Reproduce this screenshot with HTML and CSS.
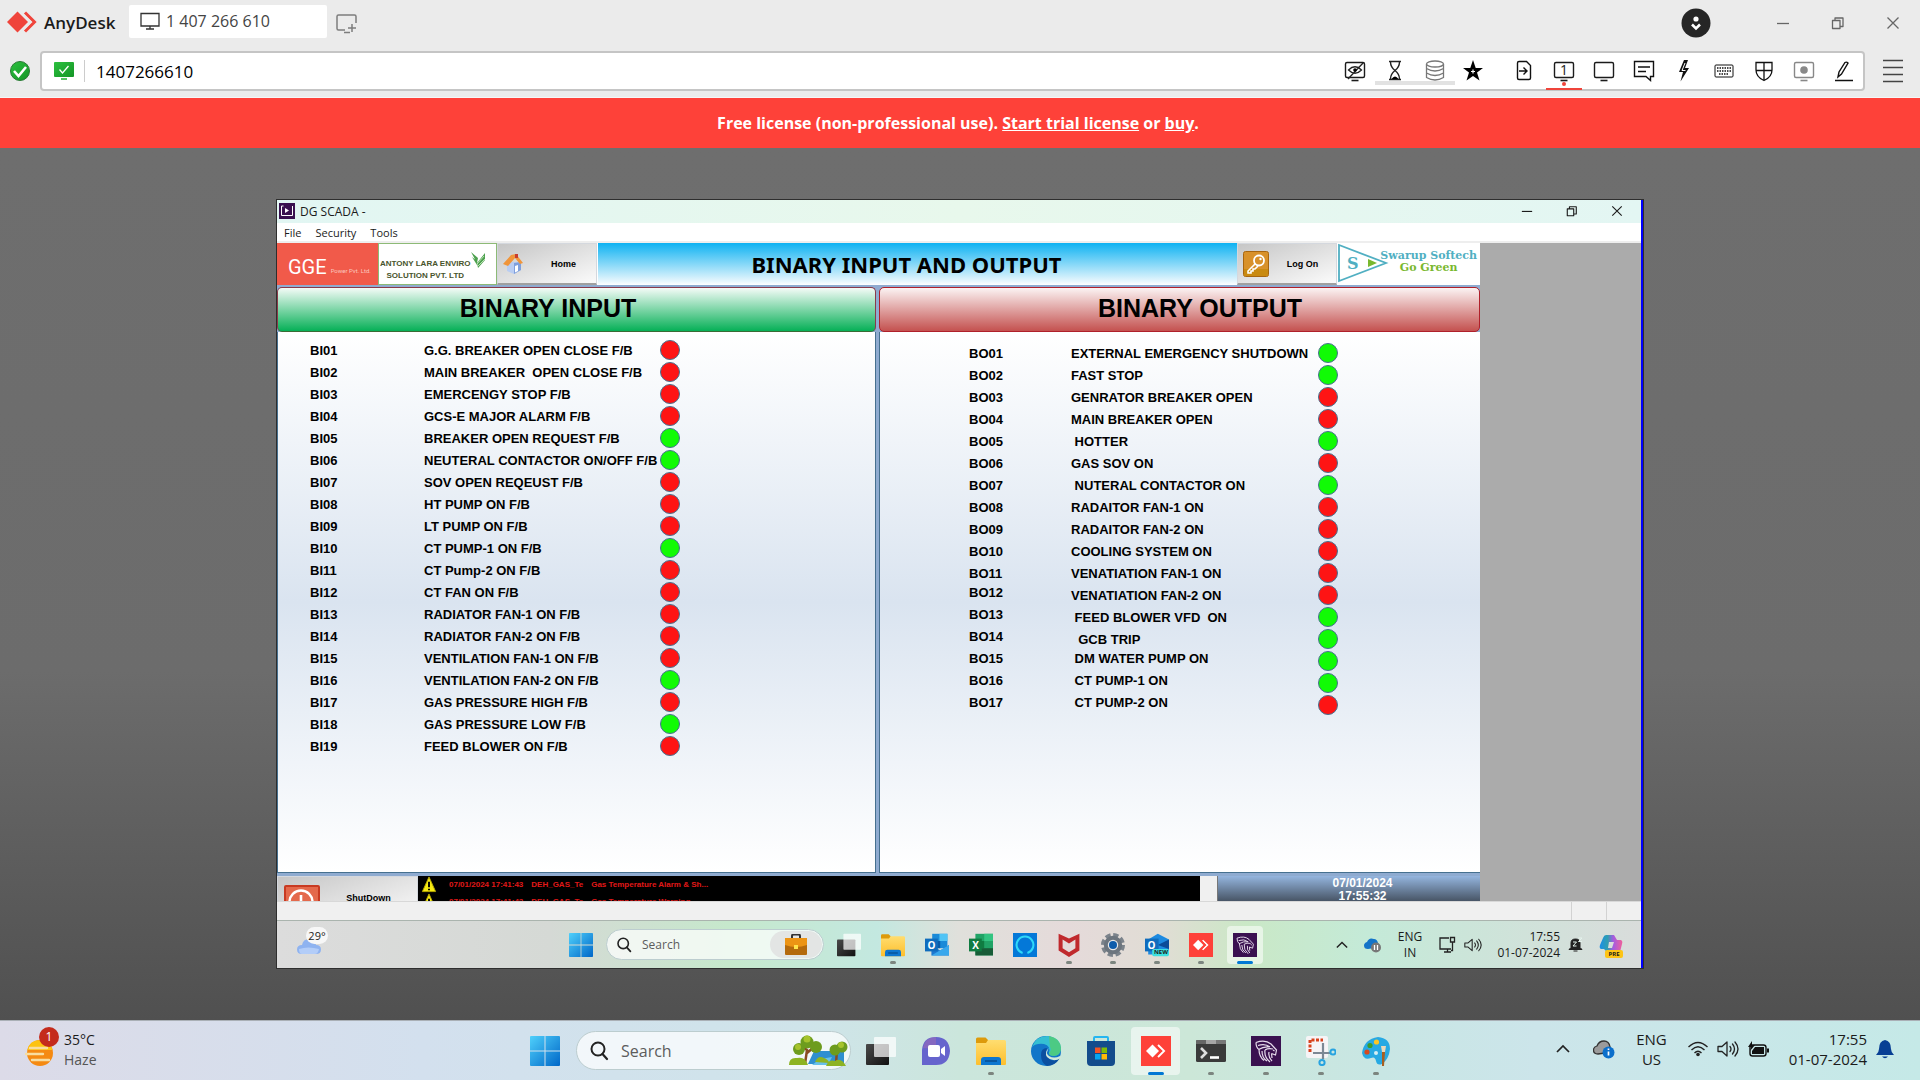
FILE: index.html
```html
<!DOCTYPE html>
<html lang="en">
  <head>
    <meta charset="UTF-8" />
    <title>AnyDesk</title>
    <link rel="stylesheet" href="styles.css">
  </head>
  <body>
    <!-- shared icons -->
    <svg class="defs" width="0" height="0" aria-hidden="true">
      <defs>
        <linearGradient id="g-blue" x1="0" y1="0" x2="1" y2="1"><stop offset="0" stop-color="#4fd0fb"/><stop offset="1" stop-color="#0067c8"/></linearGradient>
        <linearGradient id="g-green" x1="0" y1="0" x2="1" y2="1"><stop offset="0" stop-color="#2cc03f"/><stop offset="1" stop-color="#149526"/></linearGradient>
        <linearGradient id="g-dark" x1="0" y1="0" x2="1" y2="1"><stop offset="0" stop-color="#4a4a4a"/><stop offset="1" stop-color="#111"/></linearGradient>
        <linearGradient id="g-folder" x1="0" y1="0" x2="0" y2="1"><stop offset="0" stop-color="#ffdd70"/><stop offset="1" stop-color="#fdbf2d"/></linearGradient>
        <linearGradient id="g-copilot" x1="0" y1="0" x2="1" y2="0"><stop offset="0" stop-color="#1a8ee8"/><stop offset=".35" stop-color="#2f9fb0"/><stop offset=".6" stop-color="#a55be0"/><stop offset="1" stop-color="#f0609a"/></linearGradient>
        <symbol id="start" viewBox="0 0 30 30"><path fill="url(#g-blue)" d="M1 0h13.500v14.500H0V1q0-1 1-1zM15.500 0H29q1 0 1 1v13.500H15.500zM0 15.500h14.500V30H1q-1 0-1-1zM15.500 15.500H30V29q0 1-1 1H15.500z"/></symbol>
        <symbol id="lens" viewBox="0 0 20 20"><circle cx="9" cy="8" r="6.500" fill="none" stroke="#222" stroke-width="2"/><path d="M13.500 13l4.500 5" stroke="#222" stroke-width="2.200" stroke-linecap="round"/></symbol>
        <symbol id="taskview" viewBox="0 0 30 30"><rect y="8" width="23" height="21" rx="1" fill="url(#g-dark)"/><rect x="8" y="1" width="22" height="20" rx="1" fill="#fff" opacity=".72"/></symbol>
        <symbol id="folder" viewBox="0 0 30 30"><path d="M0 9V3q0-1.500 1.500-1.500h8L12 4v5z" fill="#dd9a0b"/><path d="M0 7h10l2-3h16.500Q30 4 30 5.500V28q0 1-1 1H1q-1 0-1-1z" fill="url(#g-folder)"/><path d="M5 29v-5q0-3 3-3h14q3 0 3 3v5z" fill="#0c76cf"/><path d="M9 25h12" stroke="#064d8f" stroke-width="1.500"/></symbol>
        <symbol id="anydesk" viewBox="0 0 30 30"><path d="M0 0h30v30H0z" fill="#fe4139"/><path d="M17 9l6 6-6 6" fill="none" stroke="#fff" stroke-width="2"/><path d="M13 8l7 7-7 7" fill="none" stroke="#fe4139" stroke-width="2"/><path d="M5 15l6.500-6.500L18 15l-6.500 6.500z" fill="#fff"/></symbol>
        <symbol id="lion" viewBox="0 0 30 30"><path d="M0 0h30v30H0z" fill="#3a1150"/><path d="M5 6.500Q14 3 20 8l5.500 6-1 5-4-1.500M5 6.500q0 5 3 7M7 9.500Q14 7 19 11M7.500 13.500Q13 10 19 11M8 13.500q0 7 5 11M11 15q0 7 5 10M14 14q-1 7 5 12M14 14q3-2 8-1M18 16q-1 5 3 9M22 14l1.500 1M20.500 17.500L21 22" fill="none" stroke="#e6dcec" stroke-width="1.200"/></symbol>
        <symbol id="speaker" viewBox="0 0 22 18"><path d="M1 6.500h4L10 2v14L5 11.500H1zM13 6.500q2 2.500 0 5M15.500 4q4 5 0 10M18 2q6 7 0 14" fill="none" stroke="#222" stroke-width="1.300" stroke-linejoin="round" stroke-linecap="round"/></symbol>
        <symbol id="chevron" viewBox="0 0 14 14"><path d="M1 10l6-6 6 6" fill="none" stroke="#222" stroke-width="1.700"/></symbol>
        <symbol id="close" viewBox="0 0 14 14"><path d="M1.500 1.500l11 11M12.500 1.500l-11 11" fill="none" stroke="currentColor" stroke-width="1.300"/></symbol>
        <symbol id="restore" viewBox="0 0 14 14"><path d="M1.500 4.500h7.500v8H1.500zM4 4V2h8v8.500H9.500" fill="none" stroke="currentColor" stroke-width="1.300" stroke-linejoin="round"/></symbol>
        <symbol id="minimize" viewBox="0 0 14 14"><path d="M1 7.500h12" stroke="currentColor" stroke-width="1.300"/></symbol>
        <symbol id="warning" viewBox="0 0 16 18"><path d="M8 1L15 16.500H1z" fill="#f7ec13" stroke="#b7a800" stroke-linejoin="round"/><path d="M8 6v6M8 13.500v1.500" stroke="#000" stroke-width="2"/></symbol>
        <symbol id="screen" viewBox="0 0 24 24"><rect x="2.500" y="3.500" width="19" height="15" rx="1.500" fill="none" stroke="currentColor" stroke-width="1.400"/><path d="M8.500 21.500h7" stroke="currentColor" stroke-width="1.600"/></symbol>
      </defs>
    </svg>

    <header class="tabs">
      <div class="brand">
        <svg width="30" height="22" viewBox="0 0 30 22"><path d="M0 11L10.500.5 21 11 10.500 21.500z" fill="#ef443b"/><path d="M18 1.500l9.500 9.500-9.500 9.500" fill="none" stroke="#ef443b" stroke-width="3"/><path d="M12.500 0L23.500 11l-11 11" fill="none" stroke="#ebebeb" stroke-width="2"/></svg>
        <span>AnyDesk</span>
      </div>
      <button class="tab">
        <svg width="20" height="18" viewBox="0 0 20 18"><path d="M1 1.500h18v12.500H1zM10 14v3M6 17h8" fill="none" stroke="#333" stroke-width="1.300"/></svg>
        1 407 266 610
      </button>
      <button class="new-tab" aria-label="New session">
        <svg width="22" height="20" viewBox="0 0 22 20"><path d="M9 16H2.500Q1 16 1 14.500v-12Q1 1 2.500 1h16Q20 1 20 2.500V9M16 10v8M12 14h8M8 18.500h6" fill="none" stroke="#7d7d7d" stroke-width="1.500"/></svg>
      </button>
      <div class="window-buttons">
        <button aria-label="Discovery"><svg width="30" height="30" viewBox="0 0 30 30"><circle cx="15" cy="15" r="14.500" fill="#262626"/><circle cx="15" cy="11" r="2.600" fill="#fff"/><path d="M11 16.500l4 4 4-4" fill="none" stroke="#fff" stroke-width="2.600"/></svg></button>
        <button aria-label="Minimize"><svg width="14" height="14"><use href="#minimize"/></svg></button>
        <button aria-label="Restore"><svg width="14" height="14"><use href="#restore"/></svg></button>
        <button aria-label="Close"><svg width="14" height="14"><use href="#close"/></svg></button>
      </div>
    </header>

    <div class="address-row">
      <svg class="status" width="20" height="20" viewBox="0 0 20 20"><circle cx="10" cy="10" r="9.500" fill="url(#g-green)" stroke="#2a7a35"/><path d="M4 10l4.500 5 7.500-9" fill="none" stroke="#fff" stroke-width="2.600"/></svg>
      <div class="address">
        <svg class="peer" width="20" height="18" viewBox="0 0 20 18"><rect width="20" height="15" rx="1" fill="url(#g-green)"/><path d="M7 17h6" stroke="#2cb43c" stroke-width="1.600"/><path d="M5.500 7.500l3 3.500 6-7" fill="none" stroke="#fff" stroke-width="1.300"/></svg>
        <input type="text" value="1407266610" aria-label="Remote address">
        <div class="tools">
          <button aria-label="Privacy"><svg width="24" height="24" viewBox="0 0 24 24"><use href="#screen"/><path d="M5.500 11q6.500-6.500 13 0-6.500 6.500-13 0zM20.500 3.500L5 20" fill="none" stroke="#222" stroke-width="1.300"/><circle cx="12" cy="11" r="1.800"/></svg></button>
          <button class="off" aria-label="Wait"><svg width="24" height="24" viewBox="0 0 24 24"><path d="M6 2.500h12M6 20.500h12M7.500 3q0 5 4.500 8.500Q16.500 8 16.500 3M7.500 20q0-5 4.500-8.500 4.500 3.500 4.500 8.500" fill="none" stroke="#222" stroke-width="1.400"/><path d="M8.500 20q3.500-5 7 0z"/></svg></button>
          <button class="off" aria-label="Storage"><svg width="24" height="24" viewBox="0 0 24 24"><g fill="none" stroke="#777" stroke-width="1.300"><ellipse cx="12" cy="5" rx="8.500" ry="3"/><path d="M3.500 5v13.500q8.500 5 17 0V5M3.500 9.500q8.500 5 17 0M3.500 14q8.500 5 17 0"/></g></svg></button>
          <button class="star" aria-label="Favorite"><svg width="24" height="24" viewBox="0 0 24 24"><path d="M12 1l2.700 8H22l-6 4.500 2.500 8L12 17l-6.500 4.500 2.500-8L2 9h7.300z"/><path d="M12 10.500v4M10 12.500h4" stroke="#fff" stroke-width="1.200"/></svg></button>
          <button aria-label="File transfer"><svg width="24" height="24" viewBox="0 0 24 24"><path d="M5.500 4q0-1.500 1.500-1.500h7.500l4 4V19q0 1.500-1.500 1.500H7q-1.500 0-1.500-1.500zM7 12h8M11.500 8.500L15 12l-3.500 3.500" fill="none" stroke="#111" stroke-width="1.400"/></svg></button>
          <button class="on" aria-label="Monitor 1"><svg width="24" height="24"><use href="#screen"/></svg><span>1</span></button>
          <button aria-label="Display"><svg width="24" height="24"><use href="#screen"/></svg></button>
          <button aria-label="Chat"><svg width="24" height="24" viewBox="0 0 24 24"><path d="M2.500 2.500h19v15h-3v4l-4.500-4H2.500zM6 8h12M6 12.500h8" fill="none" stroke="#111" stroke-width="1.400"/></svg></button>
          <button aria-label="Actions"><svg width="24" height="24" viewBox="0 0 24 24"><path d="M12 1h4l-3 8h4L8.500 22.500l2.500-9.500H7z" fill="#111"/><path d="M13 4l-3 7.500h3.500" fill="none" stroke="#fff"/></svg></button>
          <button aria-label="Keyboard"><svg width="24" height="24" viewBox="0 0 24 24"><rect x="3" y="6" width="18" height="12" rx="1" fill="none" stroke="#111"/><path d="M5 9h14M5 12h14M7 15h10" stroke="#111" stroke-width="1.700" stroke-dasharray="1.500 1"/></svg></button>
          <button aria-label="Permissions"><svg width="24" height="24" viewBox="0 0 24 24"><path d="M4 3.500h16V11q0 7-8 10.500Q4 18 4 11zM12 3v18M4 11.500h16" fill="none" stroke="#111" stroke-width="1.300"/></svg></button>
          <button class="dim" aria-label="Record"><svg width="24" height="24"><use href="#screen"/><circle cx="12" cy="11" r="3.800" fill="currentColor"/></svg></button>
          <button aria-label="Whiteboard"><svg width="24" height="24" viewBox="0 0 24 24"><path d="M6 18l1-5 6-9.500q1.500-1 3 .5L9.500 15zM3 21.500h18" fill="none" stroke="#111" stroke-width="1.400"/></svg></button>
        </div>
      </div>
      <button class="menu" aria-label="Menu"><svg width="20" height="24" viewBox="0 0 20 24"><path d="M0 1.500h20M0 8.500h20M0 15.500h20M0 22.500h20" stroke="#444" stroke-width="1.300"/></svg></button>
    </div>

    <div class="banner">Free license (non-professional use). <a href="#">Start trial license</a> or <a href="#">buy</a>.</div>

    <main class="workspace">
      <div class="remote">
        <div class="titlebar">
          <svg width="16" height="16" viewBox="0 0 16 16"><path d="M0 0h16v16H0z" fill="#3a1150"/><path d="M2.500 3v9.500h11V3M2.500 3h2" fill="none" stroke="#fff"/><path d="M6 5l4 2.500L6 10z" fill="#fff"/></svg>
          <span>DG SCADA -</span>
          <div class="remote-buttons">
            <button aria-label="Minimize"><svg width="12" height="12"><use href="#minimize"/></svg></button>
            <button aria-label="Restore"><svg width="12" height="12"><use href="#restore"/></svg></button>
            <button aria-label="Close"><svg width="12" height="12"><use href="#close"/></svg></button>
          </div>
        </div>
        <nav class="menubar"><button>File</button><button>Security</button><button>Tools</button></nav>

        <div class="client">
          <div class="app">
            <div class="app-header">
              <div class="gge"><b>GGE</b><small>Power Pvt. Ltd.</small></div>
              <div class="antony">
                <div>ANTONY LARA ENVIRO<br>SOLUTION PVT. LTD</div>
                <svg width="15" height="18" viewBox="0 0 15 18"><path d="M0 1l7 6-1 5zM1 6l5 4v4zM14 2L6 12l1 5 7-8z" fill="#4da14f"/><path d="M13 5l-7 8M14 8l-7 7" stroke="#b8e0b0"/></svg>
              </div>
              <button class="app-button">
                <svg width="20" height="22" viewBox="0 0 20 22"><path d="M4 9h14v8l-7 4-7-3z" fill="#b9cdf2"/><path d="M11 10l7-1v8l-7 4z" fill="#7f9fdc"/><path d="M0 11L8 2l5-1 7 9-3 1-5-6-7 8z" fill="#f0953a"/><path d="M12 1h3v4h-3z" fill="#c73c2e"/><path d="M12 13l3-1v6l-3 1.500z" fill="#fff"/></svg>
                <span>Home</span>
              </button>
              <h1>BINARY INPUT AND OUTPUT</h1>
              <button class="app-button logon">
                <svg width="26" height="26" viewBox="0 0 26 26"><rect x=".5" y=".5" width="25" height="25" rx="2" fill="#d8912a" stroke="#a8660f"/><path d="M1 18h24v6q0 1-1 1H2q-1 0-1-1z" fill="#c98a10"/><path d="M12.500 12.500L5 20v2h3v-2h2v-2h2l3-3" fill="none" stroke="#fff" stroke-width="1.600"/><circle cx="16" cy="9.500" r="5" fill="none" stroke="#fff" stroke-width="1.800"/><circle cx="17.500" cy="8" r="1.200" fill="#fff"/></svg>
                <span>Log On</span>
              </button>
              <div class="swarup">
                <svg width="52" height="40" viewBox="0 0 52 40"><path d="M2 2v36l47-18z" fill="none" stroke="#50afc2" stroke-width="1.800"/><path d="M31 16v8l9-4z" fill="#79b82e"/></svg>
                <b>S</b>
                <div>Swarup Softech<span>Go Green</span></div>
              </div>
            </div>

            <div class="panels">
              <section class="panel inputs">
                <h2>BINARY INPUT</h2>
                <div class="panel-body">
                  <table>
                    <tbody>
                      <tr><td>BI01</td><td>G.G. BREAKER OPEN CLOSE F/B</td><td><i class="red"></i></td></tr>
                      <tr><td>BI02</td><td>MAIN BREAKER  OPEN CLOSE F/B</td><td><i class="red"></i></td></tr>
                      <tr><td>BI03</td><td>EMERCENGY STOP F/B</td><td><i class="red"></i></td></tr>
                      <tr><td>BI04</td><td>GCS-E MAJOR ALARM F/B</td><td><i class="red"></i></td></tr>
                      <tr><td>BI05</td><td>BREAKER OPEN REQUEST F/B</td><td><i class="green"></i></td></tr>
                      <tr><td>BI06</td><td>NEUTERAL CONTACTOR ON/OFF F/B</td><td><i class="green"></i></td></tr>
                      <tr><td>BI07</td><td>SOV OPEN REQEUST F/B</td><td><i class="red"></i></td></tr>
                      <tr><td>BI08</td><td>HT PUMP ON F/B</td><td><i class="red"></i></td></tr>
                      <tr><td>BI09</td><td>LT PUMP ON F/B</td><td><i class="red"></i></td></tr>
                      <tr><td>BI10</td><td>CT PUMP-1 ON F/B</td><td><i class="green"></i></td></tr>
                      <tr><td>BI11</td><td>CT Pump-2 ON F/B</td><td><i class="red"></i></td></tr>
                      <tr><td>BI12</td><td>CT FAN ON F/B</td><td><i class="red"></i></td></tr>
                      <tr><td>BI13</td><td>RADIATOR FAN-1 ON F/B</td><td><i class="red"></i></td></tr>
                      <tr><td>BI14</td><td>RADIATOR FAN-2 ON F/B</td><td><i class="red"></i></td></tr>
                      <tr><td>BI15</td><td>VENTILATION FAN-1 ON F/B</td><td><i class="red"></i></td></tr>
                      <tr><td>BI16</td><td>VENTILATION FAN-2 ON F/B</td><td><i class="green"></i></td></tr>
                      <tr><td>BI17</td><td>GAS PRESSURE HIGH F/B</td><td><i class="red"></i></td></tr>
                      <tr><td>BI18</td><td>GAS PRESSURE LOW F/B</td><td><i class="green"></i></td></tr>
                      <tr><td>BI19</td><td>FEED BLOWER ON F/B</td><td><i class="red"></i></td></tr>
                    </tbody>
                  </table>
                </div>
              </section>
              <section class="panel outputs">
                <h2>BINARY OUTPUT</h2>
                <div class="panel-body">
                  <table>
                    <tbody>
                      <tr><td>BO01</td><td>EXTERNAL EMERGENCY SHUTDOWN</td><td><i class="green"></i></td></tr>
                      <tr><td>BO02</td><td>FAST STOP</td><td><i class="green"></i></td></tr>
                      <tr><td>BO03</td><td>GENRATOR BREAKER OPEN</td><td><i class="red"></i></td></tr>
                      <tr><td>BO04</td><td>MAIN BREAKER OPEN</td><td><i class="red"></i></td></tr>
                      <tr><td>BO05</td><td> HOTTER</td><td><i class="green"></i></td></tr>
                      <tr><td>BO06</td><td>GAS SOV ON</td><td><i class="red"></i></td></tr>
                      <tr><td>BO07</td><td> NUTERAL CONTACTOR ON</td><td><i class="green"></i></td></tr>
                      <tr><td>BO08</td><td>RADAITOR FAN-1 ON</td><td><i class="red"></i></td></tr>
                      <tr><td>BO09</td><td>RADAITOR FAN-2 ON</td><td><i class="red"></i></td></tr>
                      <tr><td>BO10</td><td>COOLING SYSTEM ON</td><td><i class="red"></i></td></tr>
                      <tr><td>BO11</td><td>VENATIATION FAN-1 ON</td><td><i class="red"></i></td></tr>
                      <tr><td class="raised">BO12</td><td>VENATIATION FAN-2 ON</td><td><i class="red"></i></td></tr>
                      <tr><td class="raised">BO13</td><td> FEED BLOWER VFD  ON</td><td><i class="green"></i></td></tr>
                      <tr><td class="raised">BO14</td><td>  GCB TRIP</td><td><i class="green"></i></td></tr>
                      <tr><td class="raised">BO15</td><td class="raised"> DM WATER PUMP ON</td><td><i class="green"></i></td></tr>
                      <tr><td class="raised">BO16</td><td class="raised"> CT PUMP-1 ON</td><td><i class="green"></i></td></tr>
                      <tr><td class="raised">BO17</td><td class="raised"> CT PUMP-2 ON</td><td><i class="red"></i></td></tr>
                    </tbody>
                  </table>
                </div>
              </section>
            </div>

            <div class="app-footer">
              <button class="app-button shutdown">
                <svg width="36" height="36" viewBox="0 0 36 36"><rect width="36" height="36" rx="2" fill="#c83a22"/><path d="M2 2h32v14q-16 8-32 0z" fill="#e4694c"/><circle cx="17" cy="17" r="11.500" fill="none" stroke="#fff" stroke-width="2.400"/><path d="M17 10v9" stroke="#fff" stroke-width="2.600"/></svg>
                <span>ShutDown</span>
              </button>
              <table class="alarms">
                <tbody>
                  <tr><td><svg width="16" height="17"><use href="#warning"/></svg></td><td>07/01/2024 17:41:43</td><td>DEH_GAS_Te</td><td>Gas Temperature Alarm &amp; Sh...</td></tr>
                  <tr><td><svg width="16" height="17"><use href="#warning"/></svg></td><td>07/01/2024 17:41:43</td><td>DEH_GAS_Te</td><td>Gas Temperature Warning</td></tr>
                </tbody>
              </table>
              <div class="clock">07/01/2024<br>17:55:32</div>
            </div>
          </div>
        </div>
        <div class="statusbar"><span></span><span></span></div>

        <div class="taskbar inner">
          <button class="weather" aria-label="Weather">
            <svg width="26" height="20" viewBox="0 0 26 20"><path d="M6 19q-5 0-5-4.500T6 10q1-6 7-6 6 0 7 6 5 0 5 4.500T20 19z" fill="#8fb3f0"/><path d="M3 14q9-3 20 0-1 5-4 5H6q-3 0-3-5z" fill="#b3cdf8"/></svg>
            <span class="temp">29°</span>
          </button>
          <div class="apps">
            <button aria-label="Start"><svg><use href="#start"/></svg></button>
            <label class="search"><svg width="16" height="16"><use href="#lens"/></svg><input type="search" placeholder="Search" aria-label="Search"><span class="pill"><svg width="24" height="22" viewBox="0 0 24 22"><path d="M8 4V2q0-1.500 1.500-1.500h5Q16 .5 16 2v2" fill="none" stroke="#333" stroke-width="2"/><rect x="1" y="4" width="22" height="17" rx="1" fill="#b46a0c"/><path d="M1 4h22v7q-11 4-22 0z" fill="#ec9414"/><path d="M10 11h4v4h-4z" fill="#ffe34a"/></svg></span></label>
            <button aria-label="Task view"><svg><use href="#taskview"/></svg></button>
            <button class="open" aria-label="Explorer"><svg><use href="#folder"/></svg></button>
            <button aria-label="Outlook"><svg viewBox="0 0 30 30"><path d="M9 1h19v18H9z" fill="#1a8ad8"/><path d="M18 1h10v9H18z" fill="#50c4f5"/><path d="M9 10h10v9H9z" fill="#0a5aa8"/><path d="M8 15l11 7 11-7v13H8z" fill="#1e78d0"/><path d="M8 28l22-13v13z" fill="#38a8ec"/><path d="M0 7h16v16H0z" fill="#0f6cbd"/></svg><b>O</b></button>
            <button aria-label="Excel"><svg viewBox="0 0 30 30"><path d="M8 1h22v27H8z" fill="#21a366"/><path d="M19 1h11v9H19z" fill="#33c481"/><path d="M8 10h11v9H8z" fill="#107c41"/><path d="M8 19h22v9H8z" fill="#185c37"/><path d="M0 7h16v16H0z" fill="#107c41"/></svg><b>X</b></button>
            <button aria-label="Alexa"><svg viewBox="0 0 30 30"><path d="M0 0h30v30H0z" fill="#0478d8"/><path d="M12 25a10.500 10.500 0 1 1 6 0" fill="none" stroke="#2fd8f8" stroke-width="2.600"/></svg></button>
            <button class="open" aria-label="McAfee"><svg viewBox="0 0 30 30"><path d="M2 1l13 6 13-6v21l-13 8-13-8zM7 8v11l8 5 8-5V8l-8 5z" fill="#c0292d" fill-rule="evenodd"/></svg></button>
            <button class="open" aria-label="Settings"><svg viewBox="0 0 30 30"><circle cx="15" cy="15" r="12.500" fill="none" stroke="#7b838b" stroke-width="5" stroke-dasharray="6.500 3.300"/><circle cx="15" cy="15" r="9" fill="#e8e8e8" stroke="#6c757e" stroke-width="5"/><circle cx="15" cy="15" r="5" fill="#0d5cab"/></svg></button>
            <button class="open" aria-label="New Outlook"><svg viewBox="0 0 30 30"><path d="M4 8l12-7 14 7v19H4z" fill="#1d8ae0"/><path d="M16 15L30 8v12z" fill="#0b4c98"/><path d="M0 7h17v16H0z" fill="#0f6cbd"/><rect x="9" y="20" width="21" height="9" rx="2" fill="#3de0df"/></svg><b>O</b><small>NEW</small></button>
            <button class="open" aria-label="AnyDesk"><svg><use href="#anydesk"/></svg></button>
            <button class="open active" aria-label="Runtime"><svg><use href="#lion"/></svg></button>
          </div>
          <div class="tray">
            <svg class="more" width="12" height="12"><use href="#chevron"/></svg>
            <svg width="18" height="16" viewBox="0 0 18 16"><path d="M4 12Q0 12 0 8.500 0 6 3 5q2-5 7-3 3 0 4 4l2 4z" fill="#1474c8"/><circle cx="12" cy="10.500" r="5" fill="#777"/><path d="M10.500 8v5M13.500 8v5" stroke="#fff" stroke-width="1.300"/></svg>
            <span class="lang">ENG<br>IN</span>
            <svg width="18" height="17" viewBox="0 0 18 17"><path d="M11 2H2v11h11M6 16h7M9.500 13v3M12.500 1.500h4V6h-4zM14.500 6v8.500H13" fill="none" stroke="#222" stroke-width="1.300"/></svg>
            <svg width="18" height="16"><use href="#speaker"/></svg>
            <span class="time">17:55<br>01-07-2024</span>
            <svg width="15" height="16" viewBox="0 0 15 16"><path d="M1 12.500l2-2V6q0-4 4.500-4T12 6v4.500l2 2zM5.500 14h4" fill="#222" stroke="#222"/><path d="M5 5h3.500L5 9h3.500M10.500 1H14l-3.500 3.500H14" fill="none" stroke="#e4f2ec"/></svg>
            <span class="copilot"><svg width="24" height="22" viewBox="0 0 24 22"><path d="M7 1h8l3 5h4q2 1 1 4l-2 8H8L5 15H2q-2-1-1-4L4 4q1-3 3-3zM10 8l-1 6h4l2-6z" fill="url(#g-copilot)" fill-rule="evenodd"/></svg><small>PRE</small></span>
          </div>
        </div>
      </div>
    </main>

    <footer class="taskbar outer">
      <button class="weather">
        <svg width="36" height="38" viewBox="0 0 36 38"><circle cx="15" cy="22" r="13" fill="#f58a12"/><path d="M2.500 19q2-10 12.500-10t12.500 10z" fill="#fdc310"/><path d="M5 17h17M1 23h17M7 29h17" stroke="#f8dda0" stroke-width="2.400" stroke-linecap="round"/></svg>
        <span class="badge">1</span>
        <span class="report">35°C<br><em>Haze</em></span>
      </button>
      <div class="apps">
        <button aria-label="Start"><svg><use href="#start"/></svg></button>
        <label class="search"><svg width="20" height="20"><use href="#lens"/></svg><input type="search" placeholder="Search" aria-label="Search"><svg width="60" height="32" viewBox="0 0 60 32"><path d="M26 16h30v13H20z" fill="#2f8fd0"/><path d="M24 30q8-7 20-8l-4 8z" fill="#67c0ea"/><path d="M17 29l2-14-7-5M19 18l7-6M48 29l1-15" fill="none" stroke="#8a4b22" stroke-width="2.500"/><g fill="#6d9c1e"><circle cx="11" cy="14" r="6"/><circle cx="19" cy="7" r="6.500"/><circle cx="28" cy="12" r="6"/><circle cx="47" cy="15" r="5.500"/><circle cx="54" cy="12" r="5.500"/></g><g fill="#a6c32c"><circle cx="10" cy="12" r="3"/><circle cx="19" cy="4" r="3.500"/><circle cx="53" cy="10" r="3"/></g><path d="M1 30q0-8 8-7 8-2 11 7zM27 27q3-7 9-4 5 2 5 5zM38 31q3-7 9-5 6-4 11 5z" fill="#8db323"/></svg></label>
        <button aria-label="Task view"><svg><use href="#taskview"/></svg></button>
        <button aria-label="Chat"><svg viewBox="0 0 30 30"><path d="M1 29V14Q2 1 15 1q13 0 14 14-1 14-14 14z" fill="#6664cd"/><path d="M2 12Q4 1 15 1v12z" fill="#9a6bb8" opacity=".6"/><rect x="7" y="9" width="12" height="12" rx="2" fill="#fff"/><path d="M20 13l4-3v10l-4-3z" fill="#fff"/></svg></button>
        <button class="open" aria-label="Explorer"><svg><use href="#folder"/></svg></button>
        <button aria-label="Edge"><svg viewBox="0 0 30 30"><circle cx="15" cy="15" r="15" fill="#1276c9"/><path d="M1 11Q5 0 16 0q13 1 14 12 0 7-7 8-5 0-5-3 2-7-5-9-8-1-12 3z" fill="#35bfd3"/><path d="M18 0q11 2 12 12 0 7-7 8-5 0-5-3 3-3 1-6z" fill="#52cd70" opacity=".8"/><path d="M10 19q0-7 6-7-3 8 4 12 5 1 9-2-5 8-13 8-6-3-6-11z" fill="#0b4fa0"/><path d="M18 12q-4 5 0 8 5 3 11 0l1 2q-8 5-14-1-3-5 2-9z" fill="#d2e8da"/></svg></button>
        <button aria-label="Store"><svg viewBox="0 0 30 30"><path d="M8 6V2q0-1 1-1h12q1 0 1 1v4" fill="none" stroke="#25b6f0" stroke-width="2"/><path d="M1 5h28v21q0 4-4 4H5q-4 0-4-4z" fill="#144c8c"/><path d="M9 11.500h5.500V17H9z" fill="#f35325"/><path d="M15.500 11.500H21V17h-5.500z" fill="#81bc06"/><path d="M9 18h5.500v5.500H9z" fill="#05a6f0"/><path d="M15.500 18H21v5.500h-5.500z" fill="#ffba08"/></svg></button>
        <button class="open active" aria-label="AnyDesk"><svg><use href="#anydesk"/></svg></button>
        <button class="open" aria-label="Terminal"><svg viewBox="0 0 30 30"><rect y="4" width="30" height="22" rx="1.500" fill="#3a3a3a"/><path d="M0 8V5q0-1 1-1h9v4z" fill="#666"/><path d="M10 4h10v4H10z" fill="#a5a5a5"/><path d="M20 4h9q1 0 1 1v3H20z" fill="#777"/><path d="M5 12l5 5-5 5" fill="none" stroke="#ddd" stroke-width="2.600"/><path d="M14 21.500h9" stroke="#fff" stroke-width="2.600"/></svg></button>
        <button class="open" aria-label="Runtime"><svg><use href="#lion"/></svg></button>
        <button class="open" aria-label="Snipping tool"><svg viewBox="0 0 30 30"><rect width="22" height="22" rx="2" fill="#f6f4f6"/><path d="M4 16V4h13" fill="none" stroke="#d8421c" stroke-width="3" stroke-dasharray="3 1.500"/><path d="M17 7v16M7 17h17" stroke="#7c8894" stroke-width="2.200"/><circle cx="16" cy="26.500" r="2.600" fill="none" stroke="#28a3e0" stroke-width="2"/><circle cx="27" cy="16" r="2.600" fill="none" stroke="#28a3e0" stroke-width="2"/></svg></button>
        <button class="open" aria-label="Paint"><svg viewBox="0 0 30 30"><path d="M1 17Q3 3 17 1q12 1 12 12-1 10-8 15-5 2-6-3-1-5-5-3-7 3-9-5z" fill="#27a9e3"/><circle cx="9" cy="9.500" r="2.600" fill="#3a9c2e"/><circle cx="15.500" cy="6" r="2.600" fill="#fcc624"/><circle cx="6" cy="16" r="2.600" fill="#d64a20"/><circle cx="15" cy="17" r="2" fill="#d4eef4"/><path d="M20 10h5l-1 6h-3z" fill="#ecd9bb"/><path d="M21 16h3l-1 14h-2z" fill="#a85f20"/></svg></button>
      </div>
      <div class="tray">
        <svg class="more" width="14" height="14"><use href="#chevron"/></svg>
        <svg width="22" height="20" viewBox="0 0 22 20"><path d="M5 15Q.5 15 .5 11 .5 8 4 7q2-5 7-5 5 0 6 6l2 5z" fill="#9b9b9b" stroke="#333" stroke-width="1.300"/><circle cx="15.500" cy="13.500" r="6" fill="#0b6fcb"/><path d="M15.500 12.500v4M15.500 9.500v1.600" stroke="#fff" stroke-width="1.700"/></svg>
        <span class="lang">ENG<br>US</span>
        <svg width="20" height="16" viewBox="0 0 20 16"><path d="M.5 6q9.500-9 19 0M3.500 9q6.500-6.500 13 0M6.500 12q3.500-3.500 7 0" fill="none" stroke="#222" stroke-width="1.400"/><circle cx="10" cy="13.500" r="1.800" fill="#222"/></svg>
        <svg width="22" height="18"><use href="#speaker"/></svg>
        <svg width="22" height="18" viewBox="0 0 22 18"><rect x="2" y="5" width="16" height="11" rx="2.500" fill="none" stroke="#111" stroke-width="1.400"/><path d="M7 7h9v7H4v-3zM19 8.500h2v4h-2z" fill="#111"/><path d="M4 1L0 7h3l-1 4 5-6H4z" fill="#111"/></svg>
        <span class="time">17:55<br>01-07-2024</span>
        <svg width="18" height="20" viewBox="0 0 18 20"><path d="M0 16q3-3 3-6 0-8 6-9 6 1 6 9 0 3 3 6zM6 17.500h6q-3 3.500-6 0z" fill="#083f94"/></svg>
      </div>
    </footer>
  </body>
</html>
```
FILE: styles.css
```css
* {
  box-sizing: border-box;
}
html,
body {
  height: 100%;
  margin: 0;
}
body {
  display: flex;
  flex-direction: column;
  font-family: "Open Sans", "Noto Sans", sans-serif;
  color: #1b1b1b;
  background: #ebebeb;
}
button,
input {
  margin: 0;
  padding: 0;
  border: 0;
  background: none;
  font: inherit;
  color: inherit;
}
svg {
  display: block;
  flex-shrink: 0;
}
.defs {
  position: absolute;
}

/* tab strip */
.tabs {
  display: flex;
  align-items: center;
  height: 48px;
  padding-left: 7px;
  flex-shrink: 0;
}
.brand {
  display: flex;
  align-items: center;
  gap: 7px;
  width: 122px;
  margin-bottom: 4px;
  font-size: 17px;
  font-weight: 600;
}
.tab {
  display: flex;
  align-items: center;
  gap: 6px;
  width: 198px;
  height: 33px;
  margin-bottom: 5px;
  padding: 0 0 2px 11px;
  border-radius: 2px;
  background: #fff;
  font-size: 16px;
  color: #444;
}
.new-tab {
  margin-left: 9px;
}
.window-buttons {
  display: flex;
  align-items: center;
  margin-left: auto;
  padding-bottom: 2px;
  color: #666;
}
.window-buttons button {
  display: grid;
  place-items: center;
  width: 55px;
  height: 46px;
}
.window-buttons button:first-child {
  margin-right: 32px;
}

/* address bar */
.address-row {
  display: flex;
  align-items: center;
  height: 50px;
  padding: 0 17px 4px 10px;
  flex-shrink: 0;
  border-bottom: 1px solid #f6f6f6;
}
.address {
  flex: 1;
  display: flex;
  align-items: center;
  height: 40px;
  margin: 0 18px 0 10px;
  border: 2px solid #c5c5c5;
  border-radius: 4px;
  background: #fff;
}
.peer {
  margin: 0 10px 0 12px;
}
.address input {
  flex: 1;
  height: 22px;
  padding: 2px 0 0 11px;
  border-left: 1px solid #ccc;
  font-size: 17px;
  color: #000;
}
.tools {
  display: flex;
  margin-right: -1px;
}
.tools button {
  position: relative;
  display: grid;
  place-items: center;
  width: 40px;
  height: 36px;
}
.tools .off::before {
  content: "";
  position: absolute;
  left: 0;
  right: 0;
  bottom: 4px;
  height: 4px;
  background: #e2e2e2;
}
.tools .star {
  width: 36px;
  margin-right: 13px;
}
.tools .on::before {
  content: "";
  position: absolute;
  left: 2px;
  right: 2px;
  bottom: -1px;
  height: 2px;
  background: #ef443b;
}
.tools .on::after {
  content: "";
  position: absolute;
  left: 18px;
  bottom: 3px;
  width: 4px;
  height: 4px;
  border-radius: 50%;
  background: #ef443b;
}
.tools .on span {
  position: absolute;
  top: 8px;
  font-size: 14px;
  line-height: 18px;
}
.tools .dim {
  color: #888;
}

/* licence banner */
.banner {
  flex-shrink: 0;
  height: 50px;
  line-height: 51px;
  padding-right: 4px;
  text-align: center;
  font-size: 16px;
  font-weight: 700;
  color: #fff;
  background: #fe4139;
}
.banner a {
  color: inherit;
}

/* remote screen */
.workspace {
  flex: 1;
  display: flex;
  padding: 51px 276px;
  background: linear-gradient(#6e6e6e, #6c6c6c 60%, #505050);
}
.remote {
  flex: 1;
  display: flex;
  flex-direction: column;
  min-width: 0;
  border: 1px solid #2e2e2e;
  box-shadow: inset -2px 0 #00f;
  padding-right: 2px;
}
.titlebar {
  display: flex;
  align-items: center;
  gap: 5px;
  height: 23px;
  padding: 0 2px 1px;
  font-size: 12px;
  background: linear-gradient(90deg, #e2f6f3, #e8f8ec 50%, #e3f6f3);
}
.remote-buttons {
  display: flex;
  margin-left: auto;
}
.remote-buttons button {
  display: grid;
  place-items: center;
  width: 45px;
  height: 20px;
}
.menubar {
  display: flex;
  gap: 14px;
  height: 20px;
  padding-left: 7px;
  border-bottom: 2px solid #eee;
  background: #fff;
  font-size: 11px;
}
.client {
  flex: 1;
  display: flex;
  padding-right: 161px;
  background: #ababab;
}
.app {
  flex: 1;
  display: flex;
  flex-direction: column;
  min-width: 0;
  background: #8fabd0;
  font-family: "Liberation Sans", Arial, sans-serif;
  color: #000;
}
.app-header {
  display: flex;
  height: 42px;
}
.gge {
  display: flex;
  align-items: center;
  gap: 4px;
  width: 101px;
  padding: 5px 0 0 11px;
  background: #f15a4a;
  color: #fff;
}
.gge b {
  font: 400 20px "Liberation Sans Narrow", Roboto, sans-serif;
}
.gge small {
  padding-top: 8px;
  font: 6px Roboto, sans-serif;
  white-space: nowrap;
  color: #fbc8bf;
}
.antony {
  display: flex;
  width: 119px;
  border: 1px solid #8dba76;
  background: #fff;
  font-size: 8px;
  font-weight: 700;
  line-height: 12px;
  text-align: center;
  color: #48542c;
}
.antony div {
  padding: 14px 0 0 1px;
  white-space: nowrap;
}
.antony svg {
  margin-top: 7px;
}
.app-button {
  display: flex;
  align-items: center;
  width: 100px;
  padding-left: 5px;
  border: 1px solid #d4d8de;
  border-bottom: 2px solid #a0a0a0;
  background: linear-gradient(160deg, #c6c6c6, #fbfbfb);
  font-size: 9px;
  font-weight: 700;
}
.app-button span {
  flex: 1;
  padding-left: 8px;
  text-align: center;
}
.logon span {
  padding-left: 0;
}
.app-header h1 {
  flex: 1;
  margin: 0;
  padding-right: 22px;
  border-left: 1px solid #fff;
  background: linear-gradient(#0eb2f2, #e9f7fd 92%, #fff);
  font: 700 22px/42px "Noto Sans", sans-serif;
  text-align: center;
  white-space: nowrap;
}
.swarup {
  position: relative;
  width: 143px;
  background: #fff;
  font: 700 11px/12px "DejaVu Serif", serif;
  color: #50afc2;
}
.swarup b {
  position: absolute;
  left: 10px;
  top: 15px;
  font-size: 16px;
}
.swarup div {
  position: absolute;
  right: 3px;
  top: 7px;
  white-space: nowrap;
  text-align: center;
}
.swarup span {
  display: block;
  color: #79b82e;
}

.panels {
  flex: 1;
  display: flex;
  gap: 3px;
  padding: 2px 0 3px;
}
.panel {
  flex: 599;
  display: flex;
  flex-direction: column;
}
.outputs {
  flex-grow: 601;
}
.panel h2 {
  height: 45px;
  margin: 0;
  border: 1px solid #8a3a4a;
  border-radius: 5px;
  font-size: 25px;
  line-height: 40px;
  text-align: center;
}
.inputs h2 {
  padding-right: 57px;
  border-bottom-color: #3a6b35;
  background: linear-gradient(#f4fbf7, #06b057);
}
.outputs h2 {
  padding-left: 41px;
  border-color: #b0202a;
  background: linear-gradient(#fbf3f3, #c4514f);
}
.panel-body {
  flex: 1;
  border: solid #46708f;
  border-width: 0 1px 1px;
  background: linear-gradient(#fff, #dae4f0 50%, #fff);
}
.inputs .panel-body {
  padding: 8px 0 0 32px;
}
.outputs .panel-body {
  padding: 11px 0 0 89px;
  border-right: 0;
}
.panel table {
  border-collapse: collapse;
  font-size: 13px;
  font-weight: 700;
  line-height: 16px;
}
.panel td {
  height: 22px;
  padding: 0;
  white-space: pre;
}
.panel td:first-child {
  width: 114px;
}
.panel td:nth-child(2) {
  width: 236px;
  max-width: 236px;
}
.outputs td:first-child {
  width: 102px;
}
.outputs td:nth-child(2) {
  width: 247px;
  max-width: 247px;
}
.panel .raised {
  vertical-align: top;
}
.panel i {
  display: block;
  width: 20px;
  height: 20px;
  margin-bottom: 2px;
  border: 1px solid #46708f;
  border-radius: 50%;
}
.red {
  background: #fe1414;
}
.green {
  background: #11fb05;
}

.app-footer {
  display: flex;
  height: 25px;
  overflow: hidden;
  background: #f0f0f0;
}
.shutdown {
  width: 141px;
  height: 45px;
  padding-left: 6px;
}
.shutdown svg {
  margin-top: 9px;
}
.shutdown span {
  padding-left: 0;
}
.alarms {
  flex: 1;
  display: block;
  height: 44px;
  margin-right: 17px;
  background: #000;
  color: #e01818;
  border-spacing: 0;
  font-size: 8px;
  font-weight: 700;
}
.alarms td {
  height: 17px;
  padding: 0 8px 0 0;
  white-space: nowrap;
}
.alarms td:first-child {
  padding: 0 12px 0 3px;
}
.clock {
  width: 263px;
  height: 25px;
  border-left: 1px solid #777;
  background: linear-gradient(#94b5de, #485566);
  font-size: 12px;
  font-weight: 700;
  line-height: 13px;
  padding: 1px 0 0 27px;
  text-align: center;
  color: #fff;
}
.statusbar {
  display: flex;
  justify-content: flex-end;
  height: 20px;
  border-top: 1px solid #d8d8d8;
  border-bottom: 1px solid #aab4ae;
  background: #f0f0f0;
}
.statusbar span {
  width: 35px;
  border-left: 1px solid #d2d2d2;
}

/* taskbars */
.taskbar {
  display: grid;
  flex-shrink: 0;
  align-items: center;
}
.taskbar .apps {
  display: flex;
  align-items: center;
}
.apps button {
  position: relative;
  display: grid;
  place-items: center;
}
.apps .open::after {
  content: "";
  position: absolute;
  bottom: 0;
  width: 6px;
  height: 3px;
  border-radius: 2px;
  background: #7c857f;
}
.apps .active {
  border-radius: 4px;
  background: rgba(255, 255, 255, .55);
}
.apps .active::after {
  width: 16px;
  background: #0078d4;
}
.search {
  display: flex;
  align-items: center;
  border: 1px solid #bccdcf;
  border-radius: 20px;
  background: rgba(255, 255, 255, .72);
}
.search input {
  flex: 1;
  min-width: 0;
}
.search input::placeholder {
  color: #5c5c5c;
  opacity: 1;
}
.tray {
  display: flex;
  align-items: center;
  justify-content: flex-end;
}
.lang {
  text-align: center;
}
.time {
  text-align: right;
}

.inner {
  grid-template-columns: 282fr auto 374fr;
  height: 47px;
  background: linear-gradient(90deg, #dcdcdc, #d5d9d5 20%, #c6e8cc 33%, #c3e8e0 44%, #e0e0db 50%, #e5dada 58%, #e0ddd4 65%, #cae8c6 71%, #c4ead8 80%, #d9dcdb);
}
.inner .weather {
  position: relative;
  width: 26px;
  margin-left: 19px;
}
.temp {
  position: absolute;
  left: 10px;
  top: -8px;
  width: 22px;
  border-radius: 9px;
  background: #f7f7f7;
  font-size: 11px;
  line-height: 17px;
}
.inner .apps button {
  width: 44px;
  height: 38px;
}
.inner .apps button > svg {
  width: 24px;
  height: 24px;
}
.apps button b {
  position: absolute;
  left: 11px;
  top: 12px;
  width: 11px;
  font-size: 10px;
  line-height: 14px;
  color: #fff;
}
.apps button small {
  position: absolute;
  right: 11px;
  bottom: 8px;
  font-size: 6px;
  font-weight: 700;
  line-height: 8px;
}
.inner .apps .active {
  width: 36px;
  margin: 0 4px;
}
.inner .search {
  width: 218px;
  height: 31px;
  margin: 0 3px;
  padding: 0 1px 0 9px;
  gap: 10px;
  font-size: 12px;
}
.pill {
  display: grid;
  place-items: center;
  width: 52px;
  height: 27px;
  border-radius: 14px;
  background: #e3e5e4;
}
.inner .tray {
  gap: 8px;
  padding-right: 18px;
  font-size: 12px;
  line-height: 16px;
}
.inner .more {
  margin-right: 8px;
}
.inner .lang {
  width: 40px;
}
.inner .time {
  width: 70px;
}
.copilot {
  position: relative;
  margin-left: 8px;
}
.copilot small {
  position: absolute;
  left: 6px;
  bottom: -2px;
  width: 18px;
  border-radius: 2px;
  background: #fdc416;
  font-size: 6px;
  font-weight: 700;
  line-height: 8px;
  text-align: center;
}

.outer {
  grid-template-columns: 1fr auto 1fr;
  height: 60px;
  border-top: 1px solid #aab0b6;
  background: linear-gradient(90deg, #dcdbe8, #d3e0ee 22%, #cfe4ea 42%, #cbe6dc 50%, #cce7d8 62%, #c8e6e4 72%, #cce5ea 80%, #c5e9e7);
}
.outer .weather {
  position: relative;
  display: flex;
  align-items: center;
  width: 120px;
  padding: 0 0 2px 25px;
  text-align: left;
}
.badge {
  position: absolute;
  left: 39px;
  top: -3px;
  width: 20px;
  height: 20px;
  border-radius: 50%;
  background: #c42b1c;
  color: #fff;
  font-size: 12px;
  line-height: 20px;
  text-align: center;
}
.report {
  padding-left: 3px;
  font-size: 14px;
  line-height: 20px;
}
.report em {
  font-style: normal;
  color: #555;
}
.outer .apps button {
  width: 49px;
  height: 48px;
  margin: 0 3px;
}
.outer .apps button > svg {
  width: 30px;
  height: 30px;
}
.outer .search {
  width: 275px;
  height: 39px;
  margin: 0 2px 0 4px;
  padding: 0 2px 0 12px;
  gap: 12px;
  font-size: 16px;
}
.outer .tray {
  gap: 9px;
  padding: 0 26px 3px 0;
  font-size: 15px;
  line-height: 20px;
}
.outer .more {
  margin-right: 14px;
}
.outer .lang {
  width: 55px;
}
.outer .time {
  width: 88px;
}
```
